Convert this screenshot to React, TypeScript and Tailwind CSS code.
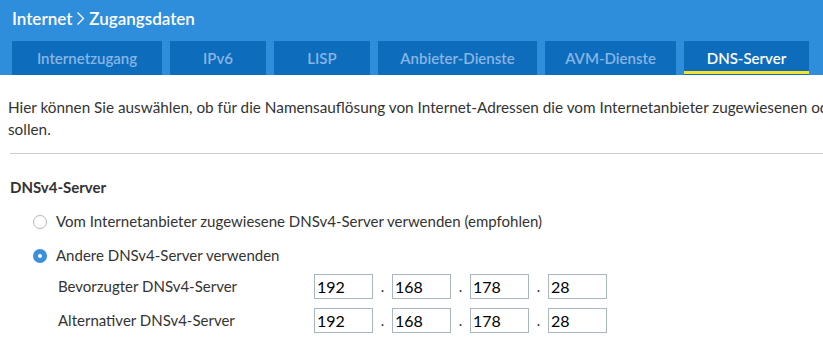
import { useState } from "react";

const tabs = [
  { label: "Internetzugang", w: "w-[150px]" },
  { label: "IPv6", w: "w-[96px]" },
  { label: "LISP", w: "w-[96px]" },
  { label: "Anbieter-Dienste", w: "w-[159px]" },
  { label: "AVM-Dienste", w: "w-[131px]" },
  { label: "DNS-Server", w: "w-[125px]", active: true },
];

const IpField = ({ parts }: { parts: string[] }) => (
  <div className="flex items-center">
    {parts.map((p, i) => (
      <div key={i} className="flex items-center">
        {i > 0 && <span className="w-[19px] text-center text-[15px] leading-none">.</span>}
        <input
          defaultValue={p}
          className="w-[59px] h-[25px] border border-[#a9b7c0] px-[2px] text-[16px] text-black outline-none"
        />
      </div>
    ))}
  </div>
);

const Radio = ({ on }: { on: boolean }) => (
  <span
    className={`w-[14px] h-[14px] rounded-full flex items-center justify-center ${
      on ? "bg-[#3b8fe0]" : "border border-[#b5b5b5] bg-white"
    }`}
  >
    {on && <span className="w-[4px] h-[4px] rounded-full bg-white" />}
  </span>
);

export default function App() {
  const [mode, setMode] = useState("other");

  return (
    <div className="w-[823px] h-[341px] overflow-hidden bg-white text-[#333] font-['Lato','Liberation_Sans',sans-serif]">
      <header className="bg-[#2f8edc] h-[75px] flex flex-col">
        <h1 className="pl-3 pt-[6px] h-[41px] text-white text-[17px] font-semibold flex items-start">
          <span>Internet</span>
          <svg className="mx-[4px] mt-[5px]" width="9" height="15" viewBox="0 0 9 15" fill="none">
            <path d="M1.5 1.5 L7.5 7.5 L1.5 13.5" stroke="white" strokeWidth="1.3" />
          </svg>
          <span>Zugangsdaten</span>
        </h1>
        <nav className="flex gap-2 pl-3">
          {tabs.map((t) => (
            <div
              key={t.label}
              className={`${t.w} h-[34px] bg-[#0e6cbd] text-[15px] font-semibold flex items-center justify-center relative ${
                t.active ? "text-white" : "text-[#86b6e4]"
              }`}
            >
              {t.label}
              {t.active && <span className="absolute left-0 right-0 bottom-[1px] h-[3px] bg-[#f5e32c]" />}
            </div>
          ))}
        </nav>
      </header>

      <main className="pl-2 text-[15px]">
        <p className="pt-[21px] leading-[22px] whitespace-nowrap text-[15.3px]">
          Hier können Sie auswählen, ob für die Namensauflösung von Internet-Adressen die vom Internetanbieter zugewiesenen oder andere DNS-Server verwendet werden
          <br />
          sollen.
        </p>
        <hr className="mt-[13px] ml-[2px] border-t border-[#cfcfcf]" />

        <h2 className="pl-[2px] mt-[22px] font-bold">DNSv4-Server</h2>

        <div className="pl-[25px] mt-[12px] flex flex-col gap-[12px]">
          <label className="flex items-center gap-[9px] h-[22px]" onClick={() => setMode("isp")}>
            <Radio on={mode === "isp"} />
            Vom Internetanbieter zugewiesene DNSv4-Server verwenden (empfohlen)
          </label>
          <label className="flex items-center gap-[9px] h-[22px]" onClick={() => setMode("other")}>
            <Radio on={mode === "other"} />
            Andere DNSv4-Server verwenden
          </label>
        </div>

        <div className="pl-[50px] mt-[7px] flex flex-col gap-[9px]">
          <div className="flex items-center">
            <span className="w-[256px]">Bevorzugter DNSv4-Server</span>
            <IpField parts={["192", "168", "178", "28"]} />
          </div>
          <div className="flex items-center">
            <span className="w-[256px]">Alternativer DNSv4-Server</span>
            <IpField parts={["192", "168", "178", "28"]} />
          </div>
        </div>
      </main>
    </div>
  );
}
